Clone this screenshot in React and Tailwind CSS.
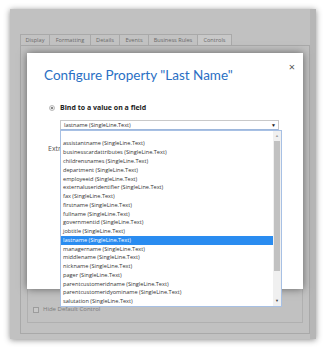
const items = [
  "",
  "assistantname (SingleLine.Text)",
  "businesscardattributes (SingleLine.Text)",
  "childrensnames (SingleLine.Text)",
  "department (SingleLine.Text)",
  "employeeid (SingleLine.Text)",
  "externaluseridentifier (SingleLine.Text)",
  "fax (SingleLine.Text)",
  "firstname (SingleLine.Text)",
  "fullname (SingleLine.Text)",
  "governmentid (SingleLine.Text)",
  "jobtitle (SingleLine.Text)",
  "lastname (SingleLine.Text)",
  "managername (SingleLine.Text)",
  "middlename (SingleLine.Text)",
  "nickname (SingleLine.Text)",
  "pager (SingleLine.Text)",
  "parentcustomeridname (SingleLine.Text)",
  "parentcustomeridyominame (SingleLine.Text)",
  "salutation (SingleLine.Text)",
];

const tabs = [
  { label: "Display", w: "w-[30px]" },
  { label: "Formatting", w: "w-[42px]" },
  { label: "Details", w: "w-[30px]" },
  { label: "Events", w: "w-[30px]" },
  { label: "Business Rules", w: "w-[50px]" },
  { label: "Controls", w: "w-[35px]" },
];

export default function App() {
  return (
    <div className="relative w-[325px] h-[349px] bg-white overflow-hidden font-['Open_Sans','Noto_Sans',sans-serif] pt-[9px] pl-[10px]">
      {/* window behind the overlay */}
      <div className="flex w-[306px] h-[330px] bg-[#c1c1c1] shadow-[0_1px_6px_rgba(0,0,0,0.45)]">
        <div className="flex flex-col w-[300px] pl-[10px] pt-[25px]">
          <div className="flex h-[11px]">
            {tabs.map((t, i) => (
              <div
                key={i}
                className={`${t.w} flex items-center justify-center border border-b-0 border-[#a9a9a9] -ml-px first:ml-0 text-[5.6px] text-[#6a6a6a] ${
                  i === 5 ? "bg-[#c8c8c8]" : "bg-[#c2c2c2]"
                }`}
              >
                {t.label}
              </div>
            ))}
          </div>
          <div className="flex-1 border border-[#a9a9a9] mb-[5px] px-[6px] pt-[10px] pb-[10px]">
            <div className="h-full border border-[#b0b0b0] flex flex-col justify-end pl-[5px] pb-[8px]">
              <div className="flex items-center gap-[4px] text-[6px] text-[#7c7c7c]">
                <span className="w-[6px] h-[6px] border border-[#9c9c9c] bg-[#c8c8c8]" />
                Hide Default Control
              </div>
            </div>
          </div>
        </div>
        <div className="w-[6px] bg-[#b6b6b6]" />
      </div>

      {/* modal dialog */}
      <div className="absolute left-[27px] top-[53px] w-[276px] h-[236px] bg-white shadow-[0_0_8px_rgba(0,0,0,0.5)] pl-[17px] pt-[13px]">
        <div className="absolute right-[8px] top-[8px] text-[11px] leading-none text-[#555]">×</div>
        <div className="h-[18px] text-[13.5px] leading-[18px] text-[#2a6fc4] font-['Lato','Open_Sans',sans-serif] whitespace-nowrap">
          Configure Property "Last Name"
        </div>
        <div className="flex items-center h-[10px] gap-[5px] mt-[19px] ml-[5px]">
          <span className="w-[6px] h-[6px] rounded-full border border-[#bbb] bg-[#eee] flex items-center justify-center">
            <span className="w-[2px] h-[2px] rounded-full bg-[#666]" />
          </span>
          <span className="text-[7px] leading-[10px] font-bold text-[#222]">Bind to a value on a field</span>
        </div>
        <div className="ml-[16px] mt-[7px] w-[219px] h-[10px] border border-[#c9c9c9] border-b-[#9fb8dc] flex items-center justify-between pl-[3px] pr-[2px]">
          <span className="text-[5.5px] leading-[8px] text-[#333]">lastname (SingleLine.Text)</span>
          <span className="text-[5px] leading-[8px] text-[#222]">▼</span>
        </div>
        <div className="mt-[14px] ml-[4px] h-[10px] leading-[10px] text-[7px] text-[#555]">Extra</div>
      </div>

      {/* dropdown list */}
      <div className="absolute left-[60px] top-[130px] w-[222px] h-[177px] bg-white border border-[#a7c0e4] flex">
        <div className="flex-1 flex flex-col">
          {items.map((it, i) => (
            <div
              key={i}
              className={`h-[8.78px] leading-[8.78px] pl-[2px] text-[5.6px] whitespace-nowrap ${
                it.startsWith("lastname") ? "bg-[#2a8cf0] text-white" : "text-[#333]"
              }`}
            >
              {it}
            </div>
          ))}
        </div>
        <div className="w-[8px] flex flex-col bg-[#f0f0f0]">
          <div className="h-[10px] flex items-center justify-center text-[4px] text-[#a0a0a0]">▲</div>
          <div className="h-[130px] mx-px bg-[#c1c1c1]" />
          <div className="flex-1" />
          <div className="h-[10px] flex items-center justify-center text-[4px] text-[#444]">▼</div>
        </div>
      </div>
    </div>
  );
}
